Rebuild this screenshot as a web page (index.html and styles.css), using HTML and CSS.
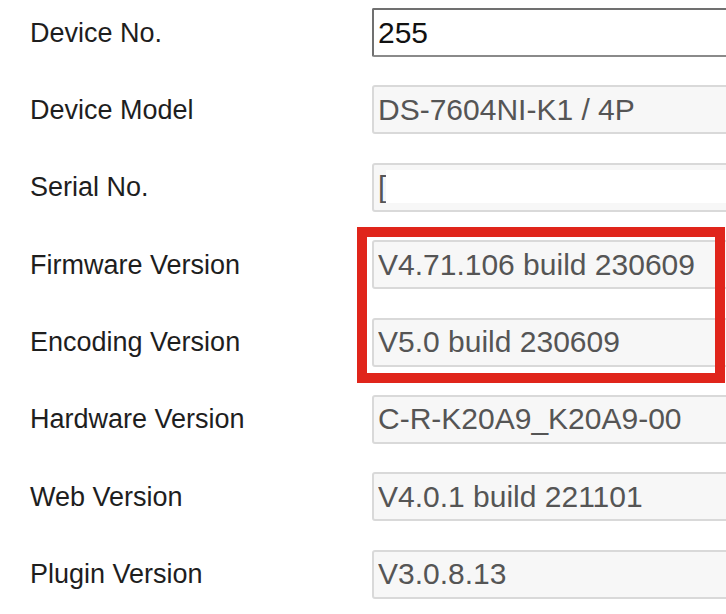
FILE: index.html
```html
<!DOCTYPE html>
<html>
<head>
<meta charset="utf-8">
<link rel="stylesheet" href="styles.css">
</head>
<body>
<div class="page">
  <div class="form">
    <label class="label">Device No.</label>
    <div class="field"><input class="input editable" type="text" value="255"></div>

    <label class="label">Device Model</label>
    <div class="field"><input class="input" type="text" value="DS-7604NI-K1 / 4P" disabled></div>

    <label class="label">Serial No.</label>
    <div class="field"><input class="input" type="text" value="[" disabled><span class="redact"></span></div>

    <label class="label">Firmware Version</label>
    <div class="field"><input class="input" type="text" value="V4.71.106 build 230609" disabled></div>

    <label class="label">Encoding Version</label>
    <div class="field"><input class="input" type="text" value="V5.0 build 230609" disabled></div>

    <label class="label">Hardware Version</label>
    <div class="field"><input class="input" type="text" value="C-R-K20A9_K20A9-00" disabled></div>

    <label class="label">Web Version</label>
    <div class="field"><input class="input" type="text" value="V4.0.1 build 221101" disabled></div>

    <label class="label">Plugin Version</label>
    <div class="field"><input class="input" type="text" value="V3.0.8.13" disabled></div>
  </div>
  <div class="highlight"></div>
</div>
</body>
</html>
```

FILE: styles.css
```css
html, body {
  margin: 0;
  padding: 0;
  background: #ffffff;
  overflow: hidden;
}

.page {
  position: relative;
  width: 726px;
  height: 614px;
  overflow: hidden;
  font-family: "Liberation Sans", Arial, sans-serif;
}

.form {
  display: grid;
  grid-template-columns: 342px 420px;
  grid-auto-rows: 49px;
  row-gap: 28.4px;
  padding: 8px 0 0 30px;
  align-items: center;
}

.label {
  font-size: 27px;
  color: #1e1e1e;
  line-height: 1;
  padding-top: 1px;
}

.field {
  position: relative;
  height: 49px;
}

.input {
  box-sizing: border-box;
  width: 100%;
  height: 49px;
  margin: 0;
  padding: 0 0 0 4px;
  font-family: "Liberation Sans", Arial, sans-serif;
  font-size: 30px;
  color: #555555;
  -webkit-text-fill-color: #555555;
  background: #f7f7f7;
  border: 2px solid #d9d9d9;
  border-radius: 3px;
  outline: none;
  opacity: 1;
}

.input.editable {
  color: #111111;
  -webkit-text-fill-color: #111111;
  background: #ffffff;
  border: 2px solid #8a8a8a;
  border-top-color: #707070;
  border-left-color: #707070;
  border-radius: 2px;
}

.redact {
  position: absolute;
  left: 14px;
  top: 7px;
  right: 0;
  height: 33px;
  background: #ffffff;
}

.highlight {
  position: absolute;
  left: 357px;
  top: 227px;
  width: 368px;
  height: 156px;
  box-sizing: border-box;
  border: 10px solid #e0251b;
}
```
